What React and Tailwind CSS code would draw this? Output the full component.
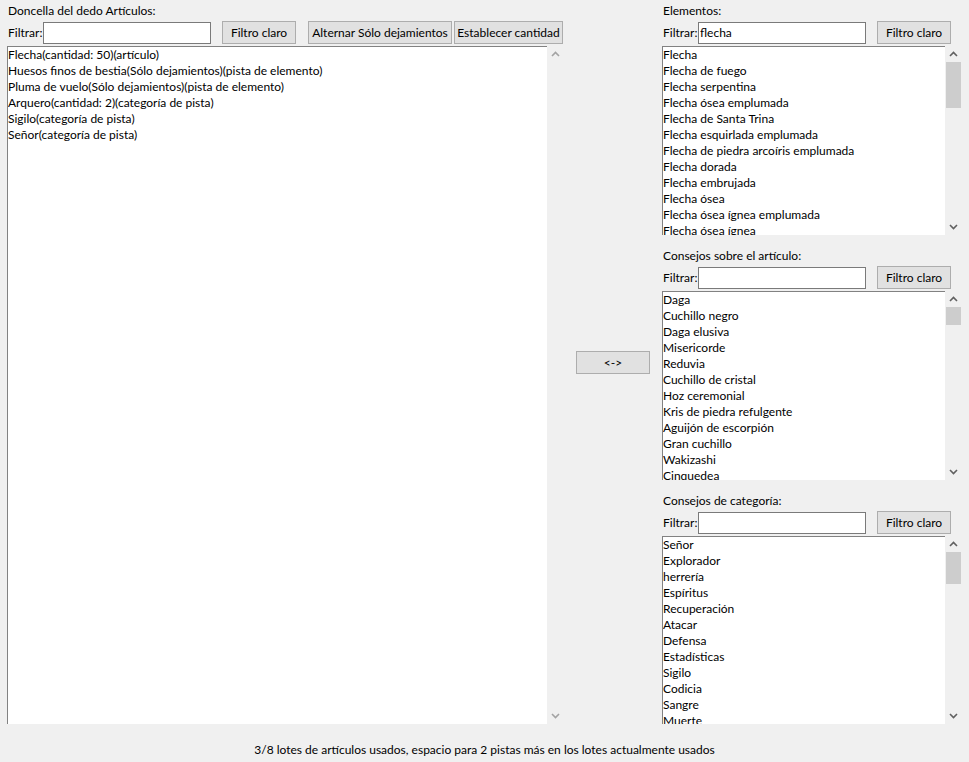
const leftItems = [
  "Flecha(cantidad: 50)(artículo)",
  "Huesos finos de bestia(Sólo dejamientos)(pista de elemento)",
  "Pluma de vuelo(Sólo dejamientos)(pista de elemento)",
  "Arquero(cantidad: 2)(categoría de pista)",
  "Sigilo(categoría de pista)",
  "Señor(categoría de pista)",
];

const sections = [
  {
    title: "Elementos:",
    filter: "flecha",
    thumb: "mt-0 h-[46px]",
    items: [
      "Flecha",
      "Flecha de fuego",
      "Flecha serpentina",
      "Flecha ósea emplumada",
      "Flecha de Santa Trina",
      "Flecha esquirlada emplumada",
      "Flecha de piedra arcoíris emplumada",
      "Flecha dorada",
      "Flecha embrujada",
      "Flecha ósea",
      "Flecha ósea ígnea emplumada",
      "Flecha ósea ígnea",
    ],
  },
  {
    title: "Consejos sobre el artículo:",
    filter: "",
    thumb: "mt-0 h-[18px]",
    items: [
      "Daga",
      "Cuchillo negro",
      "Daga elusiva",
      "Misericorde",
      "Reduvia",
      "Cuchillo de cristal",
      "Hoz ceremonial",
      "Kris de piedra refulgente",
      "Aguijón de escorpión",
      "Gran cuchillo",
      "Wakizashi",
      "Cinquedea",
    ],
  },
  {
    title: "Consejos de categoría:",
    filter: "",
    thumb: "mt-0 h-[32px]",
    items: [
      "Señor",
      "Explorador",
      "herrería",
      "Espíritus",
      "Recuperación",
      "Atacar",
      "Defensa",
      "Estadísticas",
      "Sigilo",
      "Codicia",
      "Sangre",
      "Muerte",
    ],
  },
];

function Chevron({ up, color }) {
  return (
    <svg width="9" height="6" viewBox="0 0 9 6" fill="none">
      <path
        d={up ? "M1 5L4.5 1.5L8 5" : "M1 1L4.5 4.5L8 1"}
        stroke={color}
        strokeWidth="1.6"
      />
    </svg>
  );
}

function Button({ children, className = "" }) {
  return (
    <button
      className={`h-[23px] whitespace-nowrap border border-[#adadad] bg-[#e1e1e1] px-0 text-[12px] leading-none text-black ${className}`}
    >
      {children}
    </button>
  );
}

function FilterInput({ value, className = "" }) {
  return (
    <input
      readOnly
      value={value}
      className={`h-[22px] border border-[#7a7a7a] bg-white px-[1px] text-[12px] text-black outline-none ${className}`}
    />
  );
}

function ListBox({ items, height, thumb, disabled }) {
  const arrow = disabled ? "#a3a3a3" : "#606060";
  return (
    <div className={`flex ${height}`}>
      <div className="flex-1 overflow-hidden border-t border-l border-[#828282] bg-white">
        {items.map((t) => (
          <div key={t} className="h-[16px] whitespace-nowrap text-[12px] leading-[16px] text-black">
            {t}
          </div>
        ))}
      </div>
      <div className="flex w-[17px] flex-col bg-[#f0f0f0]">
        <div className="flex h-[16px] items-center justify-center">
          <Chevron up color={arrow} />
        </div>
        <div className="flex-1 px-[1px]">
          {thumb && <div className={`w-full bg-[#cdcdcd] ${thumb}`} />}
        </div>
        <div className="flex h-[16px] items-center justify-center">
          <Chevron color={arrow} />
        </div>
      </div>
    </div>
  );
}

function FilterLabel() {
  return <span className="w-[36px] whitespace-nowrap pl-[1px] text-[12px]">Filtrar:</span>;
}

function Section({ section, last }) {
  return (
    <div className={last ? "" : "mb-[13px]"}>
      <div className="h-[16px] pl-[1px] text-[12px] leading-[16px]">{section.title}</div>
      <div className="mt-[2px] flex h-[23px] items-center">
        <FilterLabel />
        <FilterInput value={section.filter} className="w-[168px]" />
        <Button className="ml-[11px] w-[74px]">Filtro claro</Button>
      </div>
      <ListBox
        items={section.items}
        height={last ? "mt-[2px] h-[188px]" : "mt-[2px] h-[189px]"}
        thumb={section.thumb}
      />
    </div>
  );
}

export default function App() {
  return (
    <div
      className="flex h-[762px] w-[969px] flex-col bg-[#f0f0f0] text-black"
      style={{ fontFamily: 'Lato, "Noto Sans", sans-serif' }}
    >
      <div className="flex h-[724px]">
        {/* left panel */}
        <div className="ml-[7px] flex w-[557px] flex-col pt-[3px]">
          <div className="h-[16px] pl-[1px] text-[12px] leading-[16px]">Doncella del dedo Artículos:</div>
          <div className="mt-[2px] flex h-[23px] items-center">
            <FilterLabel />
            <FilterInput value="" className="w-[168px]" />
            <Button className="ml-[11px] w-[74px]">Filtro claro</Button>
            <Button className="ml-[12px] w-[144px]">Alternar Sólo dejamientos</Button>
            <Button className="ml-[2px] w-[109px]">Establecer cantidad</Button>
          </div>
          <ListBox items={leftItems} height="mt-[2px] flex-1" disabled />
        </div>

        {/* middle swap button */}
        <div className="flex w-[98px] items-center justify-center pt-[1px]">
          <Button className="w-[74px]">&lt;-&gt;</Button>
        </div>

        {/* right panels */}
        <div className="flex w-[300px] flex-col pt-[3px]">
          {sections.map((s, i) => (
            <Section key={s.title} section={s} last={i === sections.length - 1} />
          ))}
        </div>
      </div>

      <div className="pt-[18px] text-center text-[12px] leading-[16px]">
        3/8 lotes de artículos usados, espacio para 2 pistas más en los lotes actualmente usados
      </div>
    </div>
  );
}
